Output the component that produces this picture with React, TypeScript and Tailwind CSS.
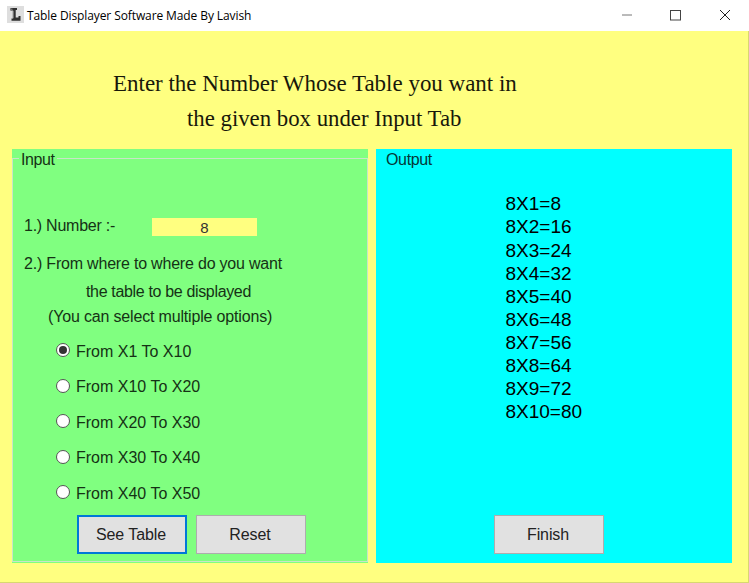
import type { ReactNode } from "react";

const ranges = ["From X1 To X10", "From X10 To X20", "From X20 To X30", "From X30 To X40", "From X40 To X50"];
const rows = Array.from({ length: 10 }, (_, i) => `8X${i + 1}=${8 * (i + 1)}`);

function Button({ children, primary = false }: { children: ReactNode; primary?: boolean }) {
  return (
    <button
      className={`flex h-[39px] w-[110px] items-center justify-center bg-[#e1e1e1] pr-[2px] pt-[1.5px] text-[16px] leading-5 tracking-[-0.1px] text-[#222] ${
        primary ? "border-2 border-[#0078d7]" : "border border-[#adadad]"
      }`}
    >
      {children}
    </button>
  );
}

function TitleBar() {
  return (
    <header className="flex h-[31px] items-start bg-white">
      <svg className="ml-[7px] mt-[6px] h-[17px] w-[17px]" viewBox="0 0 17 17">
        <rect width="17" height="17" fill="#dedede" />
        <path d="M3.5 2h6.5v2H8.7v7.5h2.8V10h2v4.8H4.5v-2.3h1.7V4.5H3.5z" fill="#303030" />
        <path d="M3.5 2.5h2v2h-2zM5.7 5h1.2v7H5.7z" fill="#777" />
      </svg>
      <h1 className="ml-[3px] mt-[6px] grow whitespace-nowrap font-['Open_Sans','Noto_Sans',sans-serif] text-[12px] leading-5 tracking-[-0.1px] text-black">
        Table Displayer Software Made By Lavish
      </h1>
      <svg className="mr-[18px] h-[31px] w-[110px]" viewBox="0 0 110 31" fill="none" stroke="#444" strokeWidth="1">
        <path d="M1 15h10" stroke="#777" />
        <rect x="49.5" y="10.5" width="10" height="9.5" />
        <path d="M99 10l10 10M109 10l-10 10" stroke="#222" />
      </svg>
    </header>
  );
}

export default function App() {
  return (
    <div className="flex h-[583px] w-[749px] flex-col overflow-hidden bg-[#ffff80] font-['Liberation_Sans',Arial,sans-serif] text-[16px] leading-5 text-[#153215]">
      <TitleBar />
      <main className="flex h-[552px] flex-col border-b border-r border-[#d8d870] pl-3">
        <div className="h-[118px] whitespace-nowrap pt-[35px] font-['Liberation_Serif',serif] text-[24px] leading-[35px] text-[#18180a]">
          <p className="ml-[101px] origin-left scale-x-[0.957]">Enter the Number Whose Table you want in</p>
          <p className="ml-[175px] origin-left scale-x-[0.949]">the given box under Input Tab</p>
        </div>
        <div className="flex gap-2">
          <section className="h-[414px] w-[356px] bg-[#80ff80] pt-px">
            <div className="flex h-5">
              <span className="mt-2 h-3 w-[7px] border-l border-t border-[#c8e4c8]" />
              <h2 className="w-[38px] pl-[2px] tracking-[-0.4px]">Input</h2>
              <span className="mt-2 h-3 grow border-r border-t border-[#c8e4c8]" />
            </div>
            <div className="h-[392px] whitespace-nowrap border-x border-b border-[#c8e4c8] pt-[46px]">
              <div className="ml-[11px] flex h-5">
                <span className="w-[128px] tracking-[-0.25px]">1.) Number :-</span>
                <span className="mt-[2px] h-[18px] w-[105px] bg-[#ffff80] text-center text-[15px] leading-[20px] text-[#333]">8</span>
              </div>
              <p className="ml-[11px] mt-[18px] tracking-[-0.2px]">2.) From where to where do you want</p>
              <p className="ml-[73px] mt-[8px] tracking-[-0.34px]">the table to be displayed</p>
              <p className="ml-[35px] mt-[5px] tracking-[-0.17px]">(You can select multiple options)</p>
              <div className="ml-[43px] mt-[12px] flex flex-col">
                {ranges.map((range, i) => (
                  <div key={range} className="flex h-[35.6px] items-start">
                    <span className="mt-[4px] flex h-[14px] w-[14px] items-center justify-center rounded-full border border-[#555] bg-white">
                      {i === 0 && <span className="h-2 w-2 rounded-full bg-[#333]" />}
                    </span>
                    <span className="ml-[6px] mt-[2.7px]">{range}</span>
                  </div>
                ))}
              </div>
              <div className="-mt-[2px] ml-16 flex gap-[9px]">
                <Button primary>See Table</Button>
                <Button>Reset</Button>
              </div>
            </div>
          </section>
          <section className="flex h-[414px] w-[356px] flex-col bg-[#00ffff] pt-px">
            <h2 className="ml-[10px] tracking-[-0.35px] text-[#053838]">Output</h2>
            <ol className="ml-[129.5px] mt-[22.4px] h-[322.6px] text-[19px] leading-[23.1px] text-black">
              {rows.map((row) => (
                <li key={row}>{row}</li>
              ))}
            </ol>
            <div className="ml-[118px]">
              <Button>Finish</Button>
            </div>
          </section>
        </div>
      </main>
    </div>
  );
}
